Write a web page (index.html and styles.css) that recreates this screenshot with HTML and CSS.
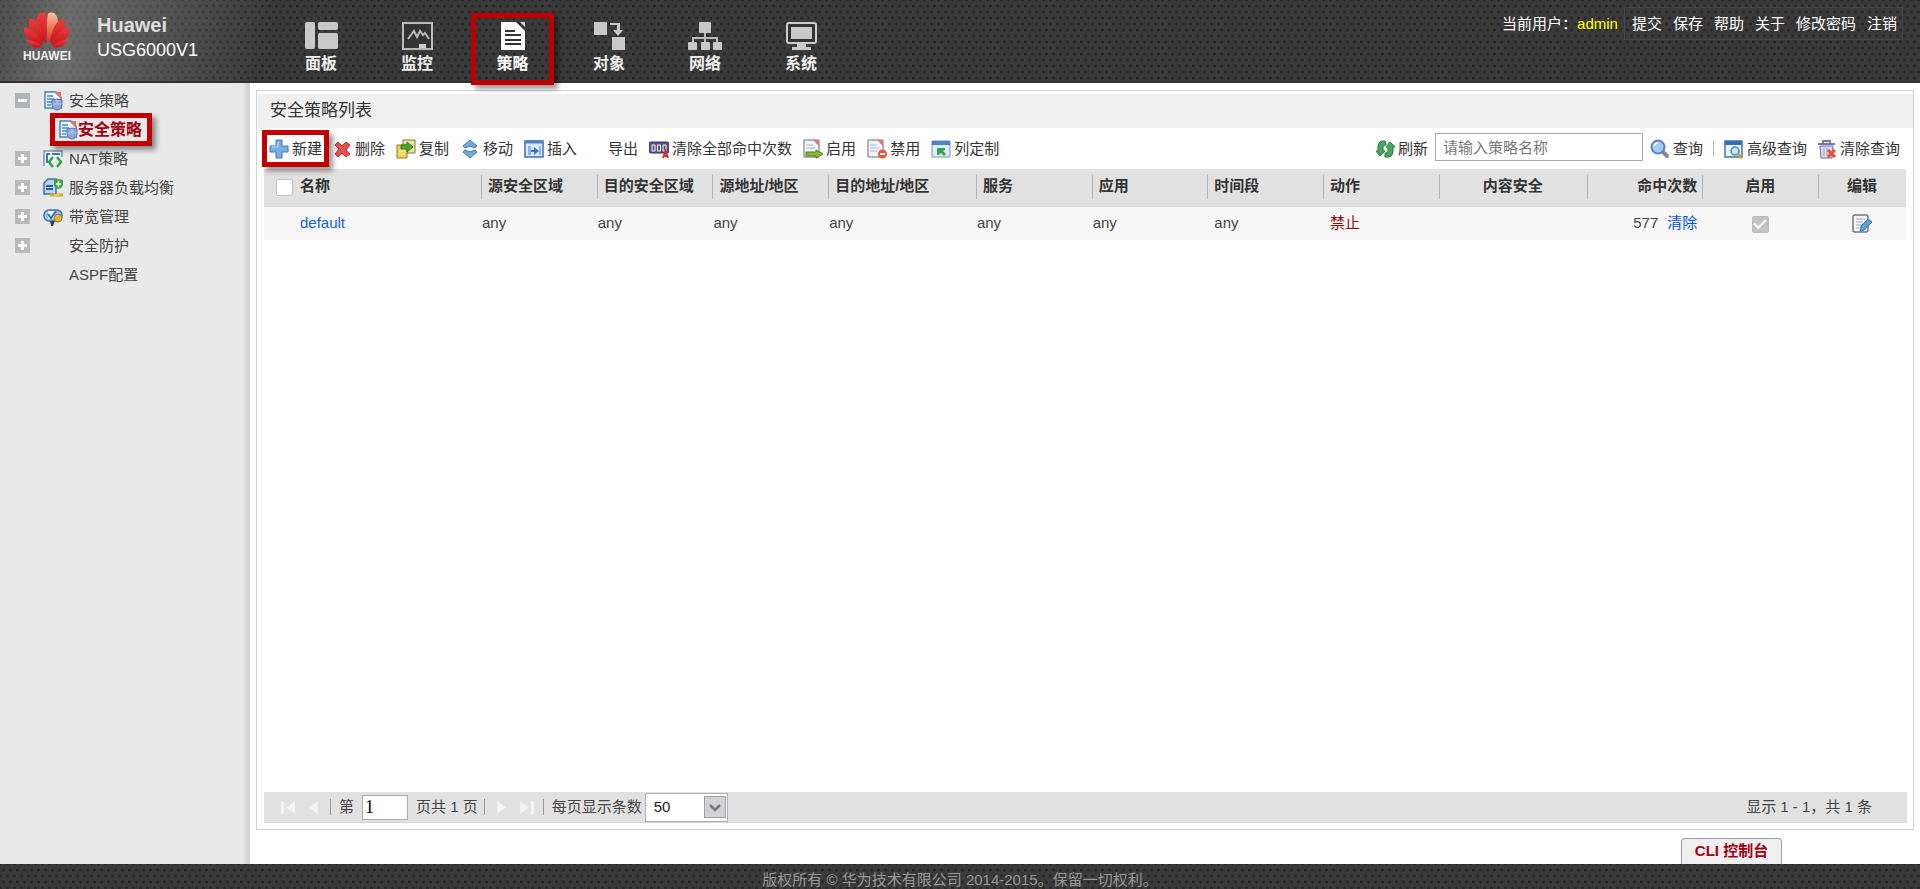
FILE: index.html
```html
<!DOCTYPE html>
<html lang="zh-CN">
<head>
<meta charset="utf-8">
<title>Huawei USG6000V1</title>
<link rel="stylesheet" href="styles.css">
</head>
<body>
<header class="header">
  <div class="brand">
    <div class="logo">
      <svg class="petals" viewBox="0 0 48 36">
        <defs>
          <linearGradient id="red" x1="0" y1="0" x2="0" y2="1"><stop offset="0" stop-color="#e8403c"/><stop offset="1" stop-color="#c8141c"/></linearGradient>
          <linearGradient id="glow" x1="0" y1="0" x2="0" y2="1"><stop offset="0" stop-color="#f8c59a"/><stop offset="1" stop-color="#dc2a22"/></linearGradient>
        </defs>
        <g fill="url(#red)">
          <path d="M23 31C13 20 11 9 15 3c2-3 6-3 8-1 2 8 1 18 0 29z"/>
          <path fill="url(#glow)" d="M25 31C35 20 37 9 33 3c-2-3-6-3-8-1-2 8-1 18 0 29z"/>
          <path d="M21 31C9 25 3 14 7 6c8 2 13 13 14 25z"/>
          <path d="M27 31c12-6 18-17 14-25-8 2-13 13-14 25z"/>
          <path d="M20 33C8 32 0 25 1 15c8 1 15 9 19 18z"/>
          <path d="M28 33c12-1 20-8 19-18-8 1-15 9-19 18z"/>
          <path d="M19 35C12 37 6 34 3 28c6 0 12 2 16 7z"/>
          <path d="M29 35c7 2 13-1 16-7-6 0-12 2-16 7z"/>
        </g>
      </svg>
      <span class="logo-name">HUAWEI</span>
    </div>
    <div class="product"><strong>Huawei</strong><span>USG6000V1</span></div>
  </div>
  <nav class="nav">
    <a class="nav-item" href="#"><svg viewBox="0 0 34 28"><g fill="#c9c9c9"><rect x="1" y="0" width="10" height="27" rx="2"/><rect x="14" y="0" width="20" height="8" rx="2"/><rect x="14" y="11" width="20" height="16" rx="2"/></g></svg>面板</a>
    <a class="nav-item" href="#"><svg viewBox="0 0 34 28"><rect x="3" y="1" width="29" height="26" fill="#333" stroke="#bbb" stroke-width="2"/><path d="M8 17l6-8 3 6 3-6 3 4 2-2 4 6" fill="none" stroke="#bbb" stroke-width="2"/><path d="M19 22h7v4h-7z" fill="#ccc"/></svg>监控</a>
    <a class="nav-item active" href="#"><svg viewBox="0 0 34 28"><path d="M5 0h15l9 9v19H5z" fill="#fff"/><path d="M24 0h5v5z" fill="#ddd"/><path d="M9 9h10M9 13h16M9 18h16M9 22h16" stroke="#333" stroke-width="2"/></svg>策略</a>
    <a class="nav-item" href="#"><svg viewBox="0 0 34 28"><g fill="#c9c9c9"><path d="M2 0h13v13H2zM20 15h13v13H20z"/><path d="M18 1h10v7h3l-5 6-5-6h4V3h-7z"/></g></svg>对象</a>
    <a class="nav-item" href="#"><svg viewBox="0 0 34 28"><path d="M17 8v14M5 22v-6h24v6" stroke="#bbb" stroke-width="2" fill="none"/><g fill="#c9c9c9"><rect x="11" y="0" width="12" height="11" rx="1"/><rect x="0" y="20" width="9" height="8" rx="1"/><rect x="13" y="20" width="9" height="8" rx="1"/><rect x="25" y="20" width="9" height="8" rx="1"/></g></svg>网络</a>
    <a class="nav-item" href="#"><svg viewBox="0 0 34 28"><rect x="3" y="1" width="29" height="20" rx="2" fill="#333" stroke="#ccc" stroke-width="2"/><path d="M7 5h21v12H7zM13 21h9v4h5v3H8v-3h5z" fill="#c9c9c9"/></svg>系统</a>
  </nav>
  <div class="user">
    <span>当前用户：<span class="user-name">admin</span></span>
    <div class="user-links"><a href="#">提交</a><a href="#">保存</a><a href="#">帮助</a><a href="#">关于</a><a href="#">修改密码</a><a href="#">注销</a></div>
  </div>
</header>

<svg class="defs" aria-hidden="true">
  <symbol id="policy" viewBox="0 0 20 20"><path d="M2 1h11l5 5v11H2z" fill="#eef6fc" stroke="#4580bd" stroke-width="1.5"/><path d="M11 1h7v7z" fill="#e2746a"/><path d="M4 5h6M4 8h7M4 11h5M4 14h4" stroke="#3f8ccb" stroke-width="1.3"/><path d="M9 9l5-1 5 1v5c0 3-3 5-5 5s-5-2-5-5z" fill="#8ba8dc" stroke="#5573b5"/><path d="M14 9v4M10 13h8" stroke="#b9cdf0"/></symbol>
</svg>

<div class="body">
  <aside class="sidebar">
    <ul class="tree">
      <li><button class="toggle minus" aria-label="折叠"></button><svg class="ico"><use href="#policy"/></svg><a href="#">安全策略</a></li>
      <li class="child"><a class="child-link" href="#"><svg class="ico"><use href="#policy"/></svg>安全策略</a></li>
      <li><button class="toggle" aria-label="展开"></button><svg class="ico" viewBox="0 0 20 20"><path d="M1 17V2h18v6" fill="#f4f8fb" stroke="#7d92a8" stroke-width="1.5"/><path d="M3 5h4M4 5v9M9 5h8" stroke="#3b78b8" stroke-width="2"/><path d="M10 8l-4 5 4 5M14 8l4 5-4 5" fill="none" stroke="#2fa04a" stroke-width="2.5"/></svg><a href="#">NAT策略</a></li>
      <li><button class="toggle" aria-label="展开"></button><svg class="ico" viewBox="0 0 20 20"><path d="M5 1h8v15H1V5z" fill="#b9d3ee" stroke="#3f6faa" stroke-width="1.5"/><path d="M3 8h7M3 11h7" stroke="#2c5c9c" stroke-width="2"/><path d="M11 2l4-1 5 1v5q-1 3-4.5 4Q12 10 11 7z" fill="#39a83a"/><path d="M15.500 3v6M13 6h5" stroke="#fff" stroke-width="1.5"/><path d="M7 17h13" stroke="#d6a929" stroke-width="3"/><path d="M11 16h5v3h-5z" fill="#eccb5d"/></svg><a href="#">服务器负载均衡</a></li>
      <li><button class="toggle" aria-label="展开"></button><svg class="ico" viewBox="0 0 20 20"><rect x="1" y="3" width="18" height="11" rx="5" fill="#9dc3ec" stroke="#4a6fa5" stroke-width="1.5"/><path d="M5 4h7v8H5z" fill="#eaf4ff"/><path d="M5 7l3 4 5-7" fill="none" stroke="#2b78bd" stroke-width="2"/><circle cx="15" cy="11" r="4" fill="#e4b53d" stroke="#9b7b28"/><path d="M7 14h5l-2 5H8z" fill="#444"/></svg><a href="#">带宽管理</a></li>
      <li><button class="toggle" aria-label="展开"></button><span class="ico"></span><a href="#">安全防护</a></li>
      <li><span class="toggle-space"></span><span class="ico"></span><a href="#">ASPF配置</a></li>
    </ul>
  </aside>

  <main class="main">
    <section class="panel">
      <h1 class="panel-title">安全策略列表</h1>
      <div class="toolbar">
        <button class="tool marked"><svg viewBox="0 0 20 20"><path d="M7 1h6v6h6v6h-6v6H7v-6H1V7h6z" fill="#79aee4" stroke="#4477b5"/><path d="M9 3v5H3" stroke="#c8e0f8" fill="none"/></svg>新建</button>
        <button class="tool"><svg viewBox="0 0 20 20"><path d="M3 6l3-3 4 4 4-4 4 3-4 5 4 4-4 3-4-4-4 4-3-3 4-5z" fill="#e8524e" stroke="#b92a2c"/></svg>删除</button>
        <button class="tool"><svg viewBox="0 0 20 20"><path d="M7 1h12v13H7z" fill="#f5e59b" stroke="#7b7448"/><path d="M1 6h10v13H1z" fill="#f2d154" stroke="#9a7b25"/><path d="M3 12h6M3 15h6" stroke="#fff3b0"/><path d="M5 6h6V3l6 5-6 5v-3H5z" fill="#46a93a" stroke="#267b27"/></svg>复制</button>
        <button class="tool"><svg viewBox="0 0 20 20"><path d="M10 1l7 6-2 2-5-2-5 2-2-2zM10 19l7-6-2-2-5 2-5-2-2 2z" fill="#72a9df" stroke="#3d76b4"/></svg>移动</button>
        <button class="tool"><svg viewBox="0 0 20 20"><path d="M1 2h18v16H1z" fill="#dcebfa" stroke="#3d6eab" stroke-width="1.5"/><path d="M1 3h18" stroke="#4e83c0" stroke-width="3"/><path d="M4 7h3v9H4zM15 7h2v9h-2z" fill="#8fb6df"/><path d="M7 11h3V8l5 4-5 4v-3H7z" fill="#3979c3"/></svg>插入</button>
        <button class="tool export">导出</button>
        <button class="tool"><svg viewBox="0 0 20 20"><rect x="0" y="3" width="20" height="11" rx="2" fill="#56518a" stroke="#383264"/><path d="M3 6h3v6H3zM8.500 6h3v6h-3zM14 6h3v6h-3z" fill="none" stroke="#fff"/><path d="M14 19l2.500-7 2.500 7M15 17h3" fill="none" stroke="#d92b2b" stroke-width="2"/></svg>清除全部命中次数</button>
        <button class="tool"><svg viewBox="0 0 20 20"><path d="M1 1h15v17H1z" fill="#f3f3fa" stroke="#6a6a82"/><path d="M10 1h6v6z" fill="#d97a72"/><path d="M3 6h7M3 9h9" stroke="#a9b7cc"/><path d="M3 13h10v-2l7 4-7 4v-2H3z" fill="#8ab82d" stroke="#56801b"/></svg>启用</button>
        <button class="tool"><svg viewBox="0 0 20 20"><path d="M1 1h15v17H1z" fill="#f3f3fa" stroke="#6a6a82"/><path d="M10 1h6v6z" fill="#d97a72"/><path d="M3 6h7M3 9h9M3 12h7" stroke="#a9b7cc"/><circle cx="15.500" cy="15" r="4.500" fill="#e8593a"/><path d="M13 15h5" stroke="#fff" stroke-width="1.8"/></svg>禁用</button>
        <button class="tool"><svg viewBox="0 0 20 20"><path d="M1 2h18v16H1z" fill="#e1ecf7" stroke="#7593b8"/><path d="M1 4h18" stroke="#4f83c3" stroke-width="4"/><path d="M6 9h8v2l-2 1 3 3-2 2-3-3-2 2H6z" fill="#35a356"/></svg>列定制</button>

        <div class="search">
          <button class="tool"><svg viewBox="0 0 20 20"><path d="M10 2Q3 1 3 8v4H1l4 5 5-5H8V8q0-2 3-2zM10 18q8 1 8-6V8h2l-5-5-4 5h2v4q0 2-3 2z" fill="#48a75c" stroke="#237a3c"/></svg>刷新</button>
          <input class="search-box" type="text" aria-label="策略名称" placeholder="请输入策略名称">
          <button class="tool"><svg viewBox="0 0 20 20"><path d="M13 13l4 4" stroke="#888" stroke-width="4" stroke-linecap="round"/><circle cx="8" cy="8" r="6.500" fill="#a6cbf5" stroke="#5a80c7" stroke-width="2"/><path d="M4 7q1-3 4-3" stroke="#fff" stroke-width="1.5" fill="none"/></svg>查询</button>
          <span class="divider"></span>
          <button class="tool"><svg viewBox="0 0 20 20"><path d="M1 2h17v16H1z" fill="#eef5fb" stroke="#3e78b8" stroke-width="1.5"/><path d="M1 4h17" stroke="#2f71b5" stroke-width="4"/><circle cx="11" cy="12" r="4" fill="#c5e1f6" stroke="#4b87bd" stroke-width="1.5"/><path d="M14 15l4 4" stroke="#d29a32" stroke-width="3"/></svg>高级查询</button>
          <button class="tool"><svg viewBox="0 0 20 20"><path d="M3 7h13l-1 12H4z" fill="#dcdcef" stroke="#6c6c98"/><path d="M1 5h17M6 4V2h7v2" stroke="#77779f" stroke-width="2" fill="none"/><path d="M7 9v8M10 9v8" stroke="#9a9abc"/><path d="M11 11l7 7M18 11l-7 7" stroke="#e4502f" stroke-width="3"/></svg>清除查询</button>
        </div>
      </div>

      <div class="grid">
        <table>
          <colgroup><col class="w-check"><col class="w-name"><col><col><col><col class="w-wide"><col><col><col><col><col class="w-wide"><col><col><col class="w-edit"></colgroup>
          <thead>
            <tr><th class="check plain"><input type="checkbox" aria-label="全选"></th><th class="plain">名称</th><th>源安全区域</th><th>目的安全区域</th><th>源地址/地区</th><th>目的地址/地区</th><th>服务</th><th>应用</th><th>时间段</th><th>动作</th><th class="center">内容安全</th><th class="right">命中次数</th><th class="center">启用</th><th class="center">编辑</th></tr>
          </thead>
          <tbody>
            <tr><td></td><td class="name"><a href="#">default</a></td><td>any</td><td>any</td><td>any</td><td>any</td><td>any</td><td>any</td><td class="inset">any</td><td class="inset deny">禁止</td><td></td><td class="right">577<a class="clear" href="#">清除</a></td><td class="center"><input type="checkbox" aria-label="启用" checked disabled></td><td class="center"><button class="edit" aria-label="编辑"><svg viewBox="0 0 20 20"><rect x="1" y="1" width="15" height="17" rx="2" fill="#f6f9fc" stroke="#6d7883" stroke-width="1.5"/><path d="M4 5h9M4 8h7M4 11h5M4 14h3" stroke="#97a8b8"/><path d="M8 17l1-5 7-7 4 3-8 8z" fill="#5c9fd8" stroke="#3870a8"/></svg></button></td></tr>
          </tbody>
        </table>
      </div>

      <div class="pager">
        <button class="page-btn" aria-label="首页"><svg viewBox="0 0 16 16"><path d="M1 2h3v12H1zM14 2v12L6 8z"/></svg></button>
        <button class="page-btn" aria-label="上一页"><svg viewBox="0 0 16 16"><path d="M12 2v12L4 8z"/></svg></button>
        <span class="bar"></span>
        <label for="page">第</label><input id="page" class="page-input" type="text" value="1">
        <span>页共 1 页</span>
        <span class="bar tight"></span>
        <button class="page-btn" aria-label="下一页"><svg viewBox="0 0 16 16"><path d="M4 2v12l8-6z"/></svg></button>
        <button class="page-btn" aria-label="末页"><svg viewBox="0 0 16 16"><path d="M12 2h3v12h-3zM2 2v12l8-6z"/></svg></button>
        <span class="bar"></span>
        <label for="size">每页显示条数</label>
        <span class="size-wrap"><select id="size" class="size"><option>50</option></select><svg class="arrow" viewBox="0 0 22 22"><rect x="0.5" y="0.5" width="21" height="21" fill="#d2d2d6" stroke="#a0a0a4"/><path d="M6 9l5 5 5-5" fill="none" stroke="#777780" stroke-width="2.5"/></svg></span>
        <span class="total">显示 1 - 1，共 1 条</span>
      </div>
    </section>
    <button class="cli">CLI 控制台</button>
  </main>
</div>
<footer class="footer">版权所有 © 华为技术有限公司 2014-2015。保留一切权利。</footer>
</body>
</html>
```
FILE: styles.css
```css
* { box-sizing: border-box; }
body {
  margin: 0;
  min-height: 100vh;
  display: flex;
  flex-direction: column;
  font: 15px/20px "Liberation Sans", "Noto Sans CJK SC", sans-serif;
  color: #444;
  background: #fff;
}
a { color: inherit; text-decoration: none; }
button { font: inherit; color: inherit; border: 0; padding: 0; background: none; white-space: nowrap; }
.defs { display: none; }

.header, .footer {
  background-color: #3b3b3c;
  background-image: radial-gradient(circle, #29292a 1px, transparent 2px), radial-gradient(circle, #29292a 1px, transparent 2px);
  background-size: 7px 12px;
  background-position: 0 0, 4px 6px;
}
.header { height: 83px; display: flex; align-items: flex-start; border-bottom: 2px solid #332f30; color: #fff; }
.brand {
  width: 273px;
  height: 81px;
  padding: 12px 0 0 22px;
  display: flex;
  gap: 25px;
  background: linear-gradient(100deg, #8884 0, #9998 25%, #8886 50%, transparent 95%);
}
.logo { width: 50px; display: flex; flex-direction: column; align-items: center; }
.petals { width: 48px; height: 36px; }
.logo-name { font-size: 12px; font-weight: bold; line-height: 16px; color: #eee; }
.product { padding-top: 1px; font-size: 18px; line-height: 25px; display: flex; flex-direction: column; }
.product strong { font-size: 20px; color: #ddd; }

.nav { display: flex; }
.nav-item {
  width: 96px;
  padding-top: 22px;
  display: flex;
  flex-direction: column;
  align-items: center;
  gap: 4px;
  font-size: 16px;
  font-weight: bold;
  color: #eee;
}
.nav-item svg { width: 34px; height: 28px; }
.nav-item.active {
  width: 83px;
  height: 72px;
  margin: 13px 7px 0 6px;
  padding-top: 4px;
  border: 5px solid #c00000;
  box-shadow: 4px 4px 5px #0006;
  color: #fff;
  position: relative;
}
.user { margin: 7px 17px 0 auto; display: flex; align-items: center; gap: 6px; white-space: nowrap; }
.user-name { color: #ff0; }
.user-links { height: 33px; padding: 0 5px 0 7px; display: flex; align-items: center; gap: 11px; border: 1px solid #464646; }

.body { flex: 1; display: flex; }
.sidebar { width: 250px; background: linear-gradient(to left, #ccc 0, #e8e8e8 8px); }
.tree { margin: 0; padding: 3px 0 0; list-style: none; }
.tree li { height: 29px; padding-left: 15px; display: flex; align-items: center; }
.ico { width: 20px; height: 20px; margin: 0 6px 0 13px; flex: none; }
.toggle, .toggle-space { width: 15px; height: 15px; flex: none; }
.toggle {
  background: linear-gradient(#fff, #fff) center / 9px 3px no-repeat, linear-gradient(#fff, #fff) center / 3px 9px no-repeat, #b9b9bb;
}
.toggle.minus { background: linear-gradient(#fff, #fff) center / 9px 3px no-repeat, #b0b3b8; }
.tree .child { padding-left: 50px; }
.child-link {
  height: 33px;
  padding: 0 5px 0 3px;
  display: flex;
  align-items: center;
  border: 5px solid #c00000;
  box-shadow: 4px 4px 5px #0006;
  font-size: 16px;
  font-weight: bold;
  color: #a00010;
  position: relative;
}
.child-link .ico { margin: 0; }

.main { flex: 1; min-width: 0; padding: 7px 6px 0; display: flex; flex-direction: column; }
.panel { flex: 1; display: flex; flex-direction: column; padding: 3px 0 6px; border: 1px solid #d0d3d5; }
.panel-title { margin: 0; padding: 0 13px; background: #efefef; font-size: 17px; font-weight: normal; line-height: 34px; color: #333; }
.toolbar { height: 41px; padding: 0 13px 0 5px; display: flex; align-items: center; gap: 11px; color: #333; }
.tool { display: flex; align-items: center; gap: 3px; }
.tool svg { width: 20px; height: 20px; flex: none; }
.tool.marked { height: 37px; padding: 0 2px; margin-right: -8px; border: 5px solid #c00000; box-shadow: 4px 4px 5px #0006; position: relative; }
.export { margin-left: 20px; }
.search { margin-left: auto; display: flex; align-items: center; gap: 7px; }
.search-box { width: 208px; height: 28px; padding: 0 7px; border: 1px solid #aaa; font: inherit; margin-bottom: 3px; }
.search-box::placeholder { color: #777; }
.divider { width: 1px; height: 16px; margin: 0 3px; background: #aab8c4; }
.search .tool:last-child { margin-left: 3px; }

.grid { flex: 1; padding: 0 7px; }
table { width: 100%; border-collapse: collapse; table-layout: fixed; }
.w-check { width: 36px; }
.w-name { width: 181px; }
.w-wide { width: 9%; }
.w-edit { width: 88px; }
th, td { padding: 0; text-align: left; white-space: nowrap; }
th {
  height: 37px;
  padding: 0 0 2px 7px;
  background: linear-gradient(#aeb4b8, #aeb4b8) left center / 1px 24px no-repeat, #e1e1e1;
  border-bottom: 1px solid #d4d4d4;
  color: #333;
}
th.plain { padding-left: 0; background: #e1e1e1; }
th.check { padding-left: 12px; }
td { height: 34px; padding-left: 1px; background: #f7f7f7; }
td.name { padding-left: 0; color: #1560d4; }
td.inset { padding-left: 7px; }
td.deny { color: #900; }
th.center, td.center { padding-left: 0; text-align: center; }
th.right, td.right { padding-right: 5px; text-align: right; }
.clear { margin-left: 9px; color: #0050f0; }
input[type="checkbox"] { appearance: none; width: 17px; height: 17px; margin: 0; border: 1px solid #c0c0c0; border-radius: 2px; background: #fff; vertical-align: middle; }
input[type="checkbox"]:checked { border-color: #bcbcbc; background: #c2c2c2; display: inline-grid; place-items: center; }
input[type="checkbox"]:checked::before { content: ""; width: 10px; height: 5px; border: solid #fff; border-width: 0 0 2px 2px; transform: rotate(-45deg); margin-bottom: 3px; }
.edit { vertical-align: middle; }
.edit svg { display: block; width: 20px; height: 20px; }

.pager { height: 31px; margin: 0 6px 0 7px; padding: 0 35px 0 16px; display: flex; align-items: center; gap: 8px; background: #e1e1e1; border-bottom: 1px solid #d4d4d4; white-space: nowrap; }
.page-btn svg { display: block; width: 17px; height: 17px; fill: #f4f4f4; }
.bar { width: 1px; height: 16px; background: #999; }
.page-input { width: 46px; height: 25px; padding: 0 2px; border: 1px solid #aaa; font: 18px "Liberation Serif", serif; color: #000; }
.bar.tight { margin-left: -2px; }
.size-wrap { position: relative; display: flex; margin-left: -5px; }
.size { appearance: none; width: 83px; height: 29px; padding: 0 8px; border: 1px solid #b0b0b0; border-radius: 0; background: #fff; font: inherit; color: #222; }
.arrow { position: absolute; right: 2px; top: 3px; width: 22px; height: 22px; pointer-events: none; }
.total { margin-left: auto; }
.cli { align-self: flex-end; width: 101px; height: 26px; margin: 8px 132px 0 0; padding-bottom: 2px; border: 1px solid #9a9fa3; border-bottom: 0; border-radius: 4px 4px 0 0; background: #efefef; font-weight: bold; color: #a00010; }

.footer { height: 25px; padding-top: 6px; overflow: hidden; text-align: center; color: #999; }
```
